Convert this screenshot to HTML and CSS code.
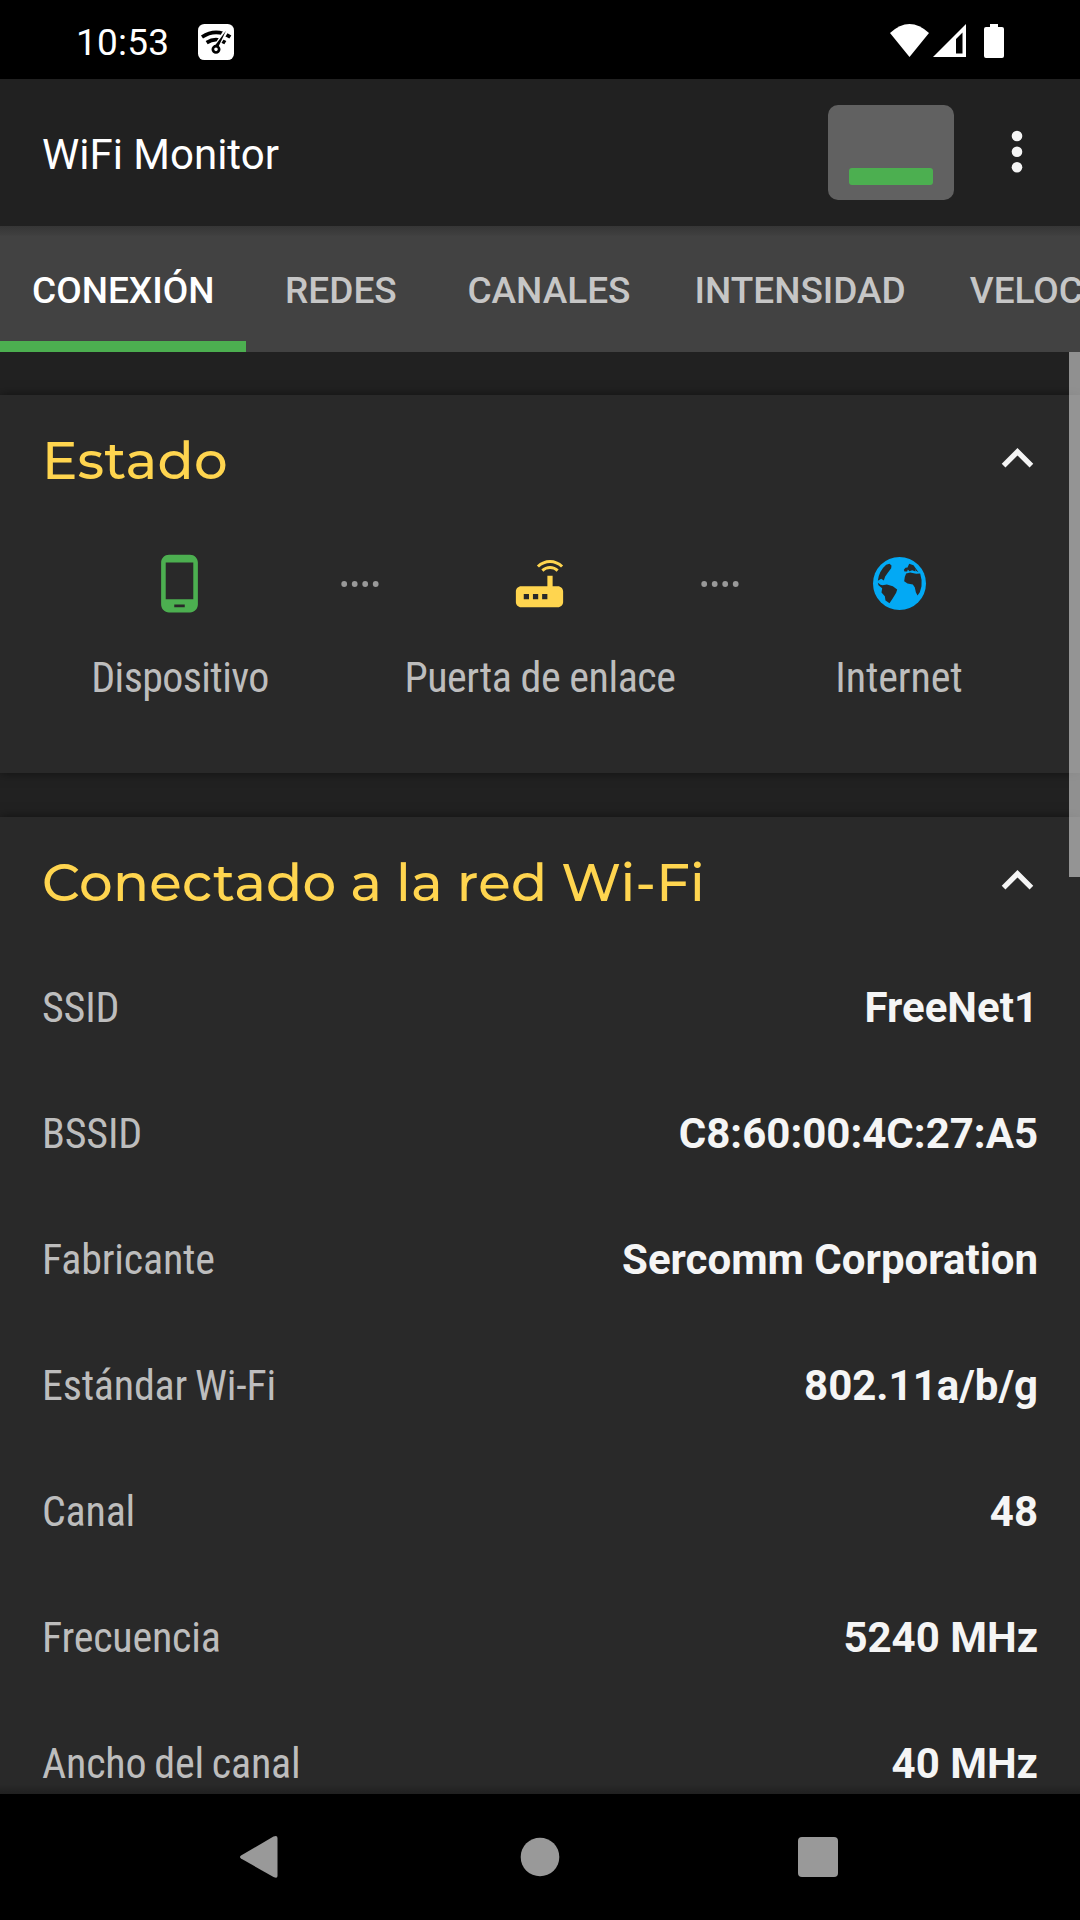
FILE: index.html
```html
<!DOCTYPE html>
<html lang="es">
<head>
<meta charset="utf-8">
<title>WiFi Monitor</title>
<link rel="stylesheet" href="styles.css">
</head>
<body>
<div class="screen">
  <div class="statusbar">
    <span class="clock">10:53</span>
    <svg class="notif" viewBox="594 71 108 108">
      <rect x="594" y="71" width="108" height="108" rx="19" fill="#fff"/>
      <g fill="none" stroke="#000" stroke-width="11">
        <path d="M606 110Q648 82 691 110"/>
        <path d="M620 127Q648 109 676 127"/>
      </g>
      <path d="M648 140L678 92" stroke="#fff" stroke-width="15"/>
      <path d="M644 137L678 91L655 140Z"/>
      <circle cx="648" cy="147" r="9.5" fill="#fff" stroke="#000" stroke-width="8"/>
    </svg>
    <div class="system">
      <svg width="39" height="33" viewBox="0 0 39 33"><path d="M0 9Q19.500-9 39 9L19.500 33Z" fill="#fff"/></svg>
      <svg width="33" height="33" viewBox="0 0 33 33"><path fill="#fff" fill-rule="evenodd" d="M33 0V33H0ZM29.500 8.500L23 15V29.500H29.500Z"/></svg>
      <svg class="battery" width="20" height="34" viewBox="0 0 20 34"><path fill="#fff" d="M6 0H14V3H18Q20 3 20 5V32Q20 34 18 34H2Q0 34 0 32V5Q0 3 2 3H6Z"/></svg>
    </div>
  </div>

  <header class="appbar">
    <h1 class="title">WiFi Monitor</h1>
    <div class="meter"><div class="meter-bar"></div></div>
    <svg class="more" width="12" height="44" viewBox="0 0 12 44" fill="#f5f5f5"><circle cx="6" cy="6" r="5.300"/><circle cx="6" cy="21.700" r="5.300"/><circle cx="6" cy="37.200" r="5.300"/></svg>
  </header>

  <nav class="tabs">
    <div class="tab active">CONEXIÓN</div>
    <div class="tab">REDES</div>
    <div class="tab">CANALES</div>
    <div class="tab">INTENSIDAD</div>
    <div class="tab">VELOCIDAD</div>
  </nav>

  <main class="content">
    <section class="card state">
      <div class="card-head">
        <h2 class="heading">Estado</h2>
        <svg class="chevron" viewBox="0 0 24 24"><path d="M12 8l-6 6 1.410 1.410L12 10.830l4.590 4.580L18 14z"/></svg>
      </div>
      <div class="path">
        <div class="node">
          <svg class="icon phone" viewBox="0 0 24 24"><path d="M16 1H8C6.340 1 5 2.340 5 4v16c0 1.660 1.340 3 3 3h8c1.660 0 3-1.340 3-3V4c0-1.660-1.340-3-3-3zm-2 20h-4v-1h4v1zm3.250-3H6.750V4h10.500v14z"/></svg>
          <span>Dispositivo</span>
        </div>
        <svg class="dots" viewBox="0 0 38 6"><circle cx="3.200" cy="3" r="2.900"/><circle cx="13.700" cy="3" r="2.900"/><circle cx="24.200" cy="3" r="2.900"/><circle cx="34.700" cy="3" r="2.900"/></svg>
        <div class="node">
          <svg class="icon router" viewBox="0 0 24 24"><path d="M20.200 5.900l.8-.8C19.600 3.700 17.800 3 16 3s-3.600.7-5 2.100l.8.8C13 4.800 14.500 4.200 16 4.200s3 .6 4.200 1.700zm-.9.8c-.9-.9-2.100-1.400-3.300-1.400s-2.400.5-3.300 1.400l.8.8c.7-.7 1.600-1 2.500-1 .9 0 1.800.3 2.500 1l.8-.8zM19 13h-2V9h-2v4H5c-1.100 0-2 .9-2 2v4c0 1.100.9 2 2 2h14c1.100 0 2-.9 2-2v-4c0-1.100-.9-2-2-2zM8 18H6v-2h2v2zm3.500 0h-2v-2h2v2zm3.500 0h-2v-2h2v2z"/></svg>
          <span>Puerta de enlace</span>
        </div>
        <svg class="dots" viewBox="0 0 38 6"><circle cx="3.200" cy="3" r="2.900"/><circle cx="13.700" cy="3" r="2.900"/><circle cx="24.200" cy="3" r="2.900"/><circle cx="34.700" cy="3" r="2.900"/></svg>
        <div class="node">
          <svg class="icon globe" viewBox="323.5 65.5 189 189">
            <circle cx="418" cy="160" r="79.500"/>
            <g class="land">
              <path d="M388 101L394 106L393 114L384 126L375 139L371 151L363 146L353 152Q356 123 378 104Z"/>
              <path d="M353 158L361 164L367 165L380 163L398 168L411 178L408 188L398 204L388 219L376 211L374 198L364 187L366 174L355 165Z"/>
              <path d="M434 140L438 130L450 127L468 131L480 130Q486 148 484 168L479 186L472 196L467 186L464 172L458 163L442 160L432 153Z"/>
              <path d="M431 119L436 113L442 112L447 101L460 105L475 126L467 122L464 115L466 124L456 120L448 123L443 118L441 124L433 124Z"/>
            </g>
          </svg>
          <span>Internet</span>
        </div>
      </div>
    </section>

    <section class="card network">
      <div class="card-head">
        <h2 class="heading">Conectado a la red Wi-Fi</h2>
        <svg class="chevron" viewBox="0 0 24 24"><path d="M12 8l-6 6 1.410 1.410L12 10.830l4.590 4.580L18 14z"/></svg>
      </div>
      <dl class="rows">
        <div class="row"><dt>SSID</dt><dd>FreeNet1</dd></div>
        <div class="row"><dt>BSSID</dt><dd>C8:60:00:4C:27:A5</dd></div>
        <div class="row"><dt>Fabricante</dt><dd>Sercomm Corporation</dd></div>
        <div class="row"><dt>Estándar Wi-Fi</dt><dd>802.11a/b/g</dd></div>
        <div class="row"><dt>Canal</dt><dd>48</dd></div>
        <div class="row"><dt>Frecuencia</dt><dd>5240 MHz</dd></div>
        <div class="row"><dt>Ancho del canal</dt><dd>40 MHz</dd></div>
      </dl>
    </section>
    <div class="scrollbar"></div>
  </main>

  <footer class="navbar">
    <svg viewBox="0 0 44 44"><path d="M1 20.500L33.500 1.500Q37.500 0 37.500 3V41Q37.500 44 33.500 42L1 23.500Q-1 22 1 20.500Z"/></svg>
    <svg viewBox="0 0 44 44"><circle cx="22" cy="22" r="19.300"/></svg>
    <svg viewBox="0 0 44 44"><rect x="2" y="2" width="40" height="40" rx="4"/></svg>
  </footer>
</div>
</body>
</html>
```
FILE: styles.css
```css
* { box-sizing: border-box; margin: 0; padding: 0; }

body {
  background: #000;
  font-family: Roboto, "Liberation Sans", sans-serif;
}

svg { display: block; flex: none; }

.screen {
  width: 1080px;
  height: 1920px;
  display: flex;
  flex-direction: column;
  overflow: hidden;
  background: #212121;
}

.statusbar {
  height: 79px;
  flex: none;
  display: flex;
  align-items: flex-start;
  padding: 0 76px;
  background: #000;
  color: #fff;
}
.clock { font-size: 37px; line-height: 43px; padding-top: 21px; width: 122px; letter-spacing: .2px; }
.notif { width: 36px; height: 36px; margin-top: 24px; }
.system { display: flex; gap: 4px; margin-left: auto; padding-top: 24px; }
.battery { margin-left: 14px; }

.appbar {
  height: 147px;
  flex: none;
  display: flex;
  align-items: center;
  padding: 0 57px 0 42px;
  background: #212121;
}
.title { flex: 1; color: #fff; font-size: 42px; font-weight: 400; line-height: 50px; padding-top: 4px; }
.meter {
  width: 126px;
  height: 95px;
  border-radius: 10px;
  background: #616161;
  padding: 63px 21px 15px;
}
.meter-bar { height: 17px; border-radius: 3px; background: #4caf50; }
.more { margin: 0 0 2px 57px; }

.tabs {
  height: 126px;
  flex: none;
  display: flex;
  overflow: hidden;
  background: linear-gradient(#363636, #3f3f3f 9px, #424242 10px);
}
.tab {
  flex: none;
  min-width: 189px;
  padding: 3px 32px 0;
  line-height: 123px;
  font-size: 37px;
  font-weight: 500;
  text-align: center;
  color: #c6c6c6;
}
.tab.active { color: #fff; box-shadow: inset 0 -11px #4caf50; }

.content {
  flex: 1;
  min-height: 0;
  position: relative;
  overflow: hidden;
  padding-top: 43px;
}
.content::after {
  content: "";
  position: absolute;
  left: 0;
  right: 0;
  bottom: 0;
  height: 10px;
  background: linear-gradient(transparent, rgba(0, 0, 0, .22));
}
.card {
  background: #292929;
  box-shadow: 0 0 10px rgba(0, 0, 0, .5);
}
.state { height: 378px; margin-bottom: 44px; }
.network { height: 1100px; }
.card-head {
  height: 126px;
  display: flex;
  align-items: center;
  justify-content: space-between;
  padding: 0 31.5px 0 42px;
}
.heading {
  padding-top: 3px;
  font-family: Montserrat, Inter, sans-serif;
  font-size: 53px;
  line-height: 64px;
  font-weight: 500;
  letter-spacing: .3px;
  word-spacing: -.8px;
  color: #ffd54f;
}
.chevron { width: 63px; height: 63px; fill: #f5f5f5; }

.path {
  display: flex;
  padding-top: 31px;
}
.node {
  width: 322px;
  display: flex;
  flex-direction: column;
  align-items: center;
  gap: 38px;
}
.node:first-child, .node:last-child { width: 341px; }
.node:first-child { padding-left: 18px; }
.node:first-child { padding-right: 1px; }
.node:nth-child(3) { padding-right: 2px; }
.node:last-child { padding-right: 21px; }
.icon { width: 63px; height: 63px; }
.phone { fill: #4caf50; }
.router { fill: #ffd54f; }
.globe { fill: #03a9f4; }
.land { fill: #292929; }
.dots { width: 38px; height: 6px; margin-top: 29px; fill: #999; }
.node span, dt {
  font-family: "Roboto Condensed", Roboto, sans-serif;
  font-stretch: 75%;
  font-size: 42px;
  line-height: 49px;
  letter-spacing: -.2px;
  word-spacing: -1.5px;
  color: #bdbdbd;
  white-space: nowrap;
}
.node span { letter-spacing: -.45px; word-spacing: 0; padding-left: 2px; }
.node:first-child span { letter-spacing: -.6px; }
.node:last-child span { letter-spacing: -.1px; padding-left: 0; }

.rows { padding: 1px 42px 0; }
.row {
  height: 126px;
  display: flex;
  align-items: center;
  justify-content: space-between;
}
dd { font-size: 42px; font-weight: 700; line-height: 49px; color: #f5f5f5; }

.scrollbar {
  position: absolute;
  top: 0;
  right: 0;
  width: 11px;
  height: 525px;
  background: rgba(255, 255, 255, .5);
}

.navbar {
  height: 126px;
  flex: none;
  display: flex;
  align-items: center;
  justify-content: center;
  gap: 234px;
  background: #000;
  fill: #999;
}
.navbar svg { width: 44px; height: 44px; }
```
